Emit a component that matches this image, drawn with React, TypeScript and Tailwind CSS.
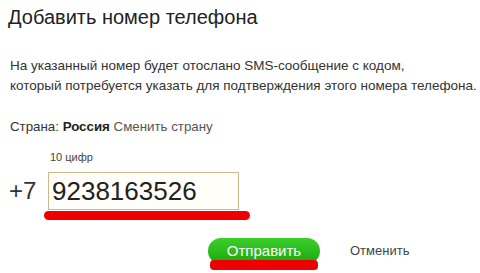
export default function App() {
  return (
    <div className="w-[480px] h-[273px] overflow-hidden bg-white text-[#333] relative" style={{ fontFamily: '"Liberation Sans", Arial, sans-serif' }}>
      <div className="pl-[8px] pt-[5px]">
        <h1 className="text-[20px] leading-[24px] text-[#222]">Добавить номер телефона</h1>
      </div>
      <div className="pl-[10px] pt-[27px] text-[13.5px] leading-[20px] text-[#333]">
        <p>На указанный номер будет отослано SMS-сообщение с кодом,</p>
        <p>который потребуется указать для подтверждения этого номера телефона.</p>
      </div>
      <div className="pl-[10px] pt-[21px] text-[13.3px] leading-[20px] text-[#333]">
        Страна: <b className="text-[#222]">Россия</b> <span className="text-[#555]">Сменить страну</span>
      </div>
      <div className="pl-[50px] pt-[13px] text-[11px] leading-[14px] text-[#444]">10 цифр</div>
      <div className="flex items-center pl-[9px] pt-[8px]">
        <span className="text-[24px] leading-[28px] text-[#333] w-[39px]">+7</span>
        <div className="relative">
          <div className="w-[191px] h-[38px] border border-[#cbb98a] bg-[#fffef8] flex items-center pl-[3px] text-[26px] text-[#222]">9238163526</div>
          <div className="absolute left-[-4px] top-[39px] w-[206px] h-[9px] rounded-full bg-[#ee0000]"></div>
        </div>
      </div>
      <div className="flex items-center pl-[208px] pt-[28px]">
        <div className="relative">
          <div className="w-[112px] h-[26px] rounded-[13px] bg-gradient-to-b from-[#3ccf2a] to-[#16a80a] flex items-center justify-center text-white text-[15px]">Отправить</div>
          <div className="absolute left-[2px] top-[22px] w-[108px] h-[10px] rounded-[4px] bg-[#ee0000]"></div>
        </div>
        <span className="ml-[30px] text-[13px] text-[#444]">Отменить</span>
      </div>
    </div>
  );
}
